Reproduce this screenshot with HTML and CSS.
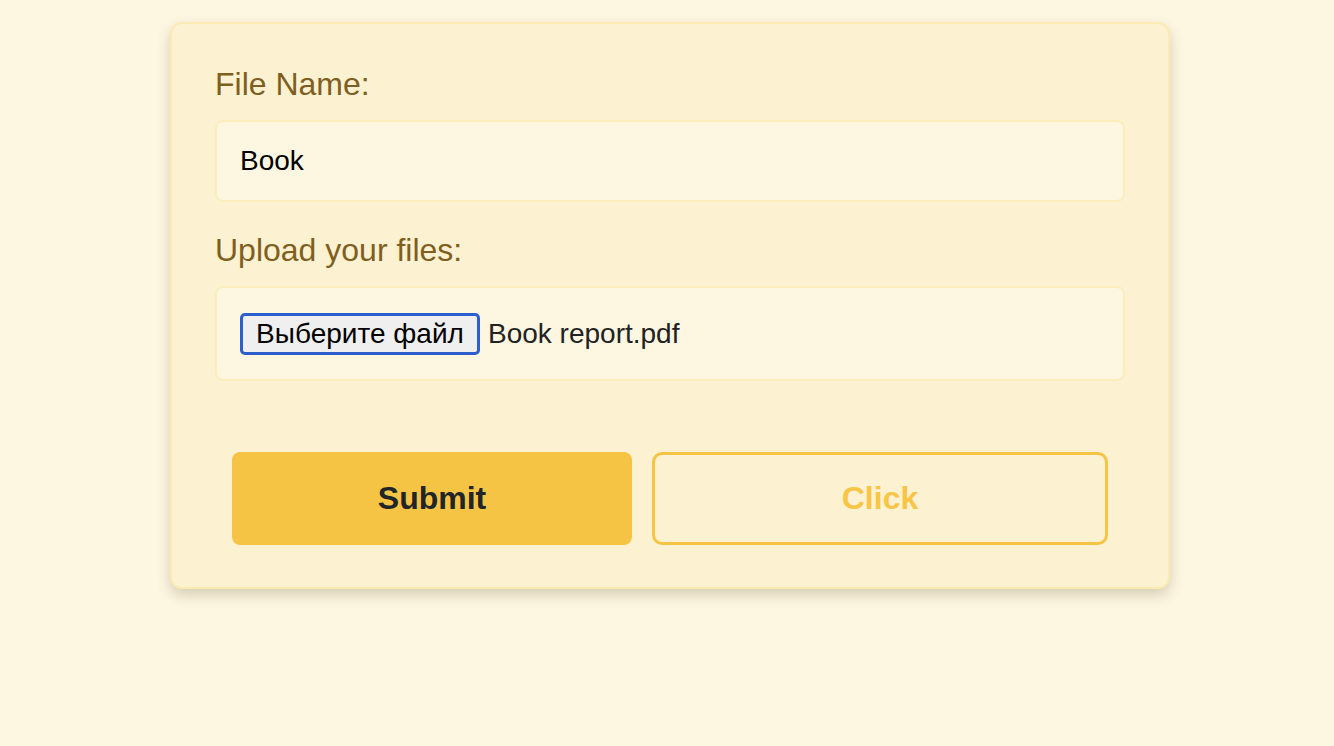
FILE: index.html
```html
<!DOCTYPE html>
<html lang="en">
<head>
<meta charset="utf-8">
<title>Upload</title>
<link rel="stylesheet" href="styles.css">
</head>
<body>
<div class="page">
  <form class="card">
    <label class="label" for="fname">File Name:</label>
    <div class="input" id="fname">Book</div>
    <label class="label">Upload your files:</label>
    <div class="upload">
      <span class="file-btn">Выберите файл</span>
      <span class="file-name">Book report.pdf</span>
    </div>
    <div class="actions">
      <button type="button" class="btn btn-submit">Submit</button>
      <button type="button" class="btn btn-click">Click</button>
    </div>
  </form>
</div>
</body>
</html>
```

FILE: styles.css
```css
html, body {
  margin: 0;
  padding: 0;
  background: #fdf6e1;
  font-family: "Liberation Sans", Arial, Helvetica, sans-serif;
}

.page {
  padding: 22px 0 60px 170px;
}

.card {
  box-sizing: border-box;
  width: 1000px;
  background: #fcf2d1;
  border: 2px solid #fbeab2;
  border-radius: 12px;
  padding: 42px 43px 42px 43px;
  box-shadow: 0 6px 14px rgba(60, 45, 10, 0.2);
  display: flex;
  flex-direction: column;
}

.label {
  display: block;
  font-size: 32px;
  line-height: 37px;
  color: #7f5f1f;
  margin-bottom: 17px;
}

.input {
  box-sizing: border-box;
  height: 82px;
  border: 2px solid #fcedbd;
  border-radius: 8px;
  background: #fdf6e1;
  padding: 0 23px;
  display: flex;
  align-items: center;
  font-size: 28px;
  color: #000;
  margin-bottom: 30px;
}

.upload {
  box-sizing: border-box;
  height: 95px;
  border: 2px solid #fcedbd;
  border-radius: 8px;
  background: #fdf6e1;
  padding: 0 23px;
  display: flex;
  align-items: center;
  gap: 8px;
  font-size: 28px;
}

.file-btn {
  box-sizing: border-box;
  height: 42px;
  width: 240px;
  border: 3px solid #2c5fcb;
  border-radius: 5px;
  background: #efefef;
  color: #000;
  display: flex;
  align-items: center;
  justify-content: center;
  font-size: 28px;
}

.file-name {
  color: #222;
}

.actions {
  display: flex;
  gap: 20px;
  padding: 0 17px;
  margin-top: 71px;
}

.btn {
  box-sizing: border-box;
  height: 93px;
  font-family: "Liberation Sans", Arial, Helvetica, sans-serif;
  font-size: 32px;
  font-weight: 700;
  cursor: pointer;
}

.btn-submit {
  width: 400px;
  border: none;
  border-radius: 8px;
  background: #f6c444;
  color: #212529;
}

.btn-click {
  flex: 1;
  border: 3px solid #f6c444;
  border-radius: 10px;
  background: transparent;
  color: #f8c546;
}
```
